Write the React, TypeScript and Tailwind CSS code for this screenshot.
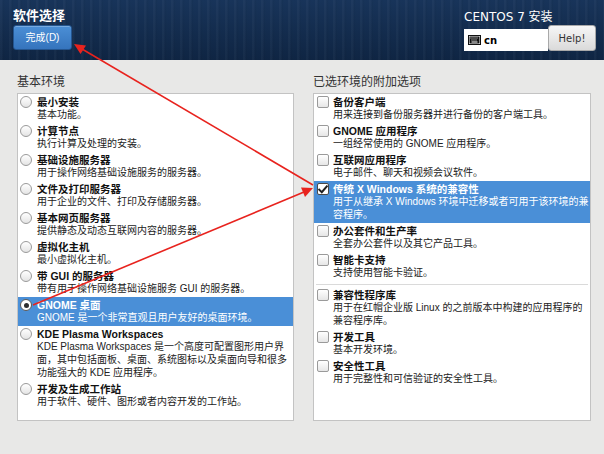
import React from "react";

type Item = { title: string; desc: string[]; active?: boolean };

const leftItems: Item[] = [
  { title: "最小安装", desc: ["基本功能。"] },
  { title: "计算节点", desc: ["执行计算及处理的安装。"] },
  { title: "基础设施服务器", desc: ["用于操作网络基础设施服务的服务器。"] },
  { title: "文件及打印服务器", desc: ["用于企业的文件、打印及存储服务器。"] },
  { title: "基本网页服务器", desc: ["提供静态及动态互联网内容的服务器。"] },
  { title: "虚拟化主机", desc: ["最小虚拟化主机。"] },
  { title: "带 GUI 的服务器", desc: ["带有用于操作网络基础设施服务 GUI 的服务器。"] },
  { title: "GNOME 桌面", desc: ["GNOME 是一个非常直观且用户友好的桌面环境。"], active: true },
  {
    title: "KDE Plasma Workspaces",
    desc: [
      "KDE Plasma Workspaces 是一个高度可配置图形用户界",
      "面，其中包括面板、桌面、系统图标以及桌面向导和很多",
      "功能强大的 KDE 应用程序。",
    ],
  },
  { title: "开发及生成工作站", desc: ["用于软件、硬件、图形或者内容开发的工作站。"] },
];

const rightTop: Item[] = [
  { title: "备份客户端", desc: ["用来连接到备份服务器并进行备份的客户端工具。"] },
  { title: "GNOME 应用程序", desc: ["一组经常使用的 GNOME 应用程序。"] },
  { title: "互联网应用程序", desc: ["电子邮件、聊天和视频会议软件。"] },
  {
    title: "传统 X Windows 系统的兼容性",
    desc: ["用于从继承 X Windows 环境中迁移或者可用于该环境的兼", "容程序。"],
    active: true,
  },
  { title: "办公套件和生产率", desc: ["全套办公套件以及其它产品工具。"] },
  { title: "智能卡支持", desc: ["支持使用智能卡验证。"] },
];

const rightBottom: Item[] = [
  {
    title: "兼容性程序库",
    desc: ["用于在红帽企业版 Linux 的之前版本中构建的应用程序的", "兼容程序库。"],
  },
  { title: "开发工具", desc: ["基本开发环境。"] },
  { title: "安全性工具", desc: ["用于完整性和可信验证的安全性工具。"] },
];

function Radio({ on }: { on?: boolean }) {
  return (
    <div
      className={`flex h-[12px] w-[12px] shrink-0 items-center justify-center rounded-full border ${
        on ? "border-[#5a5a5a] bg-white" : "border-[#9a9a9a] bg-[linear-gradient(180deg,#ffffff,#e4e4e4)]"
      }`}
    >
      {on && <div className="h-[5px] w-[5px] rounded-full bg-[#2e2e2e]" />}
    </div>
  );
}

function Check({ on }: { on?: boolean }) {
  return (
    <div
      className={`flex h-[12px] w-[12px] shrink-0 items-center justify-center rounded-[2px] border ${
        on ? "border-[#4a4a4a] bg-white" : "border-[#9a9a9a] bg-[linear-gradient(180deg,#ffffff,#e6e6e6)]"
      }`}
    >
      {on && (
        <svg width="10" height="9" viewBox="0 0 10 9">
          <path d="M1.2 4.6 L3.8 7.2 L8.8 1.4" fill="none" stroke="#222" strokeWidth="2" strokeLinecap="square" />
        </svg>
      )}
    </div>
  );
}

function Row({ item, kind }: { item: Item; kind: "radio" | "check" }) {
  const a = item.active;
  return (
    <div className={`flex py-[2px] ${kind === "radio" ? "pl-[2px]" : "pl-[3px]"} ${a ? "bg-[#4a8fd7]" : ""}`}>
      <div className={`${kind === "radio" ? "w-[17px]" : "w-[16px]"} shrink-0`}>
        {kind === "radio" ? <Radio on={a} /> : <Check on={a} />}
      </div>
      <div className="min-w-0">
        <div className={`whitespace-nowrap text-[10.5px] font-bold leading-[12px] ${a ? "text-white" : "text-[#111]"}`}>
          {item.title}
        </div>
        {item.desc.map((d, i) => (
          <div key={i} className={`whitespace-nowrap text-[10px] leading-[13px] ${a ? "text-white" : "text-[#222]"}`}>
            {d}
          </div>
        ))}
      </div>
    </div>
  );
}

function Keyboard() {
  return (
    <svg width="13" height="10" viewBox="0 0 13 10">
      <rect x="0.5" y="0.5" width="12" height="9" fill="#fff" stroke="#111" />
      <rect x="1.5" y="1.5" width="10" height="7" fill="#111" />
      <g fill="#fff">
        <rect x="2.5" y="2.5" width="1" height="1" />
        <rect x="4.5" y="2.5" width="1" height="1" />
        <rect x="6.5" y="2.5" width="1" height="1" />
        <rect x="8.5" y="2.5" width="1" height="1" />
        <rect x="3.5" y="4.5" width="1" height="1" />
        <rect x="5.5" y="4.5" width="1" height="1" />
        <rect x="7.5" y="4.5" width="1" height="1" />
        <rect x="3.5" y="6.5" width="6" height="1" />
      </g>
    </svg>
  );
}

export default function App() {
  return (
    <div className="relative h-[454px] w-[604px] overflow-hidden bg-[#e8e8e7] font-['Liberation_Sans','Noto_Sans_CJK_SC',sans-serif]">
      {/* Header */}
      <div className="flex h-[60px] justify-between bg-[repeating-linear-gradient(90deg,rgba(255,255,255,0.03)_0px,rgba(255,255,255,0.03)_2px,rgba(0,0,0,0.04)_3px,transparent_5px,transparent_9px),linear-gradient(180deg,#18345a_0%,#0f2543_100%)]">
        <div className="pl-[13px] pt-[8px]">
          <div className="text-[13px] font-bold leading-[16px] text-white">软件选择</div>
          <button className="mt-[1px] flex h-[25px] w-[59px] items-center justify-center rounded-[3px] border border-[#24558f] bg-[linear-gradient(180deg,#4b8fd6,#3574bd)] text-[10px] text-white shadow-[inset_0_1px_0_rgba(255,255,255,0.25)]">
            完成(D)
          </button>
        </div>
        <div className="flex flex-col pr-[8px] pt-[9px]">
          <div className="text-[12px] leading-[16px] text-white font-['DejaVu_Sans','Noto_Sans_CJK_SC',sans-serif]">
            CENTOS 7 安装
          </div>
          <div className="flex items-end">
            <div className="flex h-[22px] w-[84px] items-center gap-[3px] bg-white pl-[4px]">
              <Keyboard />
              <span className="text-[10px] font-bold text-black font-['DejaVu_Sans',sans-serif]">cn</span>
            </div>
            <button className="flex h-[26px] w-[48px] items-center justify-center rounded-[3px] border border-[#a9a9a9] bg-[linear-gradient(180deg,#f6f6f6,#dadada)] text-[10px] text-[#333] font-['DejaVu_Sans',sans-serif]">
              Help!
            </button>
          </div>
        </div>
      </div>

      {/* Content */}
      <div className="flex gap-[19px] pl-[17px] pt-[14px]">
        <div className="w-[277px]">
          <div className="mb-[3px] text-[12px] leading-[16px] text-[#333]">基本环境</div>
          <div className="h-[328px] border border-[#c3c3c3] bg-white">
            {leftItems.map((it, i) => (
              <Row key={i} item={it} kind="radio" />
            ))}
          </div>
        </div>
        <div className="w-[278px]">
          <div className="mb-[3px] text-[12px] leading-[16px] text-[#333]">已选环境的附加选项</div>
          <div className="h-[328px] border border-[#c3c3c3] bg-white">
            {rightTop.map((it, i) => (
              <Row key={i} item={it} kind="check" />
            ))}
            <div className="mx-[2px] mb-[2px] mt-[3px] h-px bg-[#dadada]" />
            {rightBottom.map((it, i) => (
              <Row key={i} item={it} kind="check" />
            ))}
          </div>
        </div>
      </div>

      {/* Annotation arrows */}
      <svg className="pointer-events-none absolute inset-0" width="604" height="454" viewBox="0 0 604 454">
        <line x1="313" y1="185" x2="82" y2="49" stroke="#e8231e" strokeWidth="1.6" />
        <polygon points="74,44 86,45.5 80.5,54" fill="#e8231e" />
        <line x1="33" y1="305" x2="304" y2="192" stroke="#e8231e" strokeWidth="1.6" />
        <polygon points="313,188 301,187.5 305,197" fill="#e8231e" />
      </svg>
    </div>
  );
}
